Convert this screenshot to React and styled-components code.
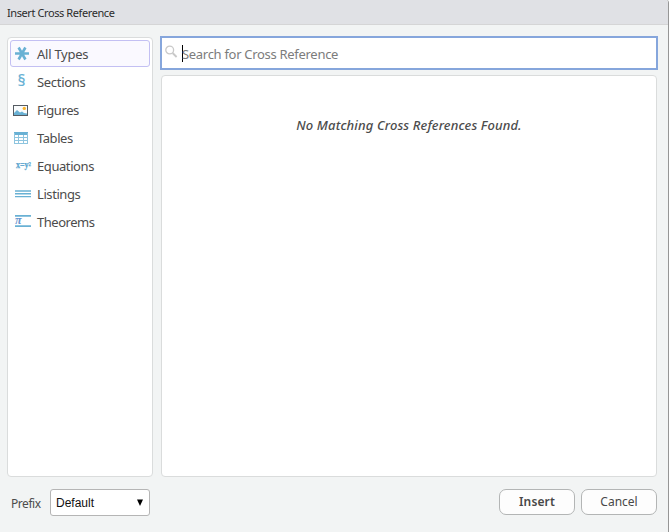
import React from "react";
import styled, { createGlobalStyle } from "styled-components";

const GlobalStyle = createGlobalStyle`
  * { box-sizing: border-box; }
  html, body { margin: 0; background: #f2f4f4; overflow: hidden; }
  body { font-family: "Noto Sans", "Open Sans", sans-serif; color: #4c4c4c; }
`;

const Dialog = styled.div`
  display: flex;
  flex-direction: column;
  width: 669px;
  height: 532px;
  background: #f2f4f4;
  border-right: 1px solid #969696;
  border-top-right-radius: 3px;
  overflow: hidden;
`;

const TitleBar = styled.header`
  flex: none;
  height: 25px;
  padding-left: 7px;
  background: #e0e1e5;
  border-bottom: 1px solid #d5d5d6;
  font-size: 11px;
  line-height: 26px;
  letter-spacing: -0.41px;
  color: #2c2c2c;
`;

const Body = styled.main`
  display: grid;
  grid-template-columns: 146px 498px;
  column-gap: 7px;
  height: 452px;
  padding: 11px 0 0 7px;
`;

const TypeList = styled.nav`
  height: 440px;
  margin-top: 1px;
  padding: 2px;
  background: #fff;
  border: 1px solid #dadcdc;
  border-radius: 4px;
`;

const TypeItem = styled.div`
  display: flex;
  align-items: center;
  height: 27px;
  margin-bottom: 1px;
  border: 1px solid ${(p) => (p.$selected ? "#c3c0f3" : "transparent")};
  border-radius: 3px;
  background: ${(p) => (p.$selected ? "#faf9ff" : "transparent")};
`;

const IconSlot = styled.span`
  flex: none;
  width: 26px;
  height: 25px;
  svg { display: block; }
`;

const TypeLabel = styled.span`
  font-size: 13px;
  line-height: 25px;
  padding-top: 2px;
  letter-spacing: ${(p) => p.$spacing}px;
  white-space: nowrap;
`;

const Content = styled.section`
  display: flex;
  flex-direction: column;
`;

const SearchBox = styled.div`
  display: flex;
  align-items: center;
  height: 34px;
  border: 2px solid #86a6dc;
  background: #fff;
  padding-left: 3px;
`;

const Caret = styled.span`
  width: 1px;
  height: 17px;
  margin: 1px -1px 0 3px;
  background: #000;
`;

const Placeholder = styled.span`
  padding-top: 2px;
  font-size: 13px;
  line-height: 20px;
  letter-spacing: -0.3px;
  color: #7c7c7c;
`;

const Results = styled.div`
  width: 496px;
  height: 402px;
  margin: 5px 0 0 1px;
  padding-top: 39px;
  background: #fff;
  border: 1px solid #dadcdc;
  border-radius: 4px;
  text-align: center;
  font-size: 13px;
  line-height: 20px;
  font-style: italic;
  font-weight: 500;
  letter-spacing: 0.13px;
`;

const Footer = styled.footer`
  display: flex;
  height: 55px;
  padding: 12px 11px 0 11px;
`;

const PrefixLabel = styled.label`
  width: 39px;
  padding-top: 6px;
  font-size: 12px;
  line-height: 18px;
  letter-spacing: -0.45px;
`;

const Select = styled.div`
  display: flex;
  align-items: center;
  justify-content: space-between;
  width: 100px;
  height: 27px;
  margin-right: auto;
  padding: 0 5px 0 5px;
  background: #fff;
  border: 1px solid #b5b5b5;
  border-radius: 3px;
  font-family: "Liberation Sans", Arial, sans-serif;
  font-size: 12px;
  color: #111;
`;

const Button = styled.button`
  width: 76px;
  height: 26px;
  margin-left: 6px;
  padding: 0 0 1px;
  background: #fdfdfd;
  border: 1px solid #b3b5b5;
  border-radius: 7px;
  font-family: inherit;
  font-size: 12px;
  letter-spacing: ${(p) => (p.$primary ? 0.15 : 0)}px;
  font-weight: ${(p) => (p.$primary ? 600 : 400)};
  line-height: 22px;
  color: #484848;
`;

const BLUE = "#69b1d4";

const Icon = ({ children }) => (
  <svg width="26" height="25" viewBox="0 0 26 25">{children}</svg>
);

const icons = {
  all: (
    <Icon>
      <path d="M4 12.5h14M7.6 6.5l6.8 12M14.4 6.5l-6.8 12" stroke={BLUE} strokeWidth="2.6" fill="none" />
    </Icon>
  ),
  section: (
    <Icon>
      <text x="6.6" y="16.8" fontFamily="Noto Sans" fontSize="16" fontWeight="500" fill={BLUE}>§</text>
    </Icon>
  ),
  figure: (
    <Icon>
      <rect x="2.5" y="8.5" width="14" height="10" fill="#fafcfd" stroke="#555b62" />
      <path d="M3 18v-2l3-3 3 2.5 2-1 2 1.5 3 .5v1.5z" fill={BLUE} />
      <circle cx="13.3" cy="11.4" r="1.7" fill="#fbb52c" />
    </Icon>
  ),
  table: (
    <Icon>
      <path d="M3 7h14v3H3z" fill={BLUE} />
      <path d="M3.5 8v11M7.5 10v9M12.5 10v9M16.5 8v11M3 12.5h14M3 15.5h14M3 18.5h14" stroke="#8ec5df" fill="none" />
    </Icon>
  ),
  equation: (
    <Icon>
      <text x="5" y="14.5" fontFamily="Liberation Serif" fontSize="9.5" fontWeight="700" fill="#5da6cf" stroke="#5da6cf" strokeWidth=".25" textLength="15" lengthAdjust="spacingAndGlyphs">x=y²</text>
    </Icon>
  ),
  listing: (
    <Icon>
      <path d="M4 10h16M4 12.8h16M4 15.6h16" stroke={BLUE} strokeWidth="1.4" />
    </Icon>
  ),
  theorem: (
    <Icon>
      <path d="M4 6.9h16M4 17.1h16" stroke={BLUE} strokeWidth="1.8" />
      <text x="4" y="14.7" fontFamily="Liberation Serif" fontSize="12" fontStyle="italic" fontWeight="700" fill="#6a97cf">π</text>
    </Icon>
  ),
};

const types = [
  { id: "all", label: "All Types", spacing: -0.25 },
  { id: "section", label: "Sections", spacing: -0.3 },
  { id: "figure", label: "Figures", spacing: -0.42 },
  { id: "table", label: "Tables", spacing: -0.45 },
  { id: "equation", label: "Equations", spacing: -0.42 },
  { id: "listing", label: "Listings", spacing: -0.42 },
  { id: "theorem", label: "Theorems", spacing: -0.48 },
];

export default function App() {
  return (
    <>
      <GlobalStyle />
      <Dialog>
        <TitleBar>Insert Cross Reference</TitleBar>
        <Body>
          <TypeList>
            {types.map((t) => (
              <TypeItem key={t.id} $selected={t.id === "all"}>
                <IconSlot>{icons[t.id]}</IconSlot>
                <TypeLabel $spacing={t.spacing}>{t.label}</TypeLabel>
              </TypeItem>
            ))}
          </TypeList>
          <Content>
            <SearchBox>
              <svg width="14" height="28" viewBox="0 0 14 28" fill="none" stroke="#c9c9c9">
                <circle cx="4.7" cy="11" r="3.9" strokeWidth="1.3" />
                <path d="M7.6 14l4 4" strokeWidth="1.8" />
              </svg>
              <Caret />
              <Placeholder>Search for Cross Reference</Placeholder>
            </SearchBox>
            <Results>No Matching Cross References Found.</Results>
          </Content>
        </Body>
        <Footer>
          <PrefixLabel>Prefix</PrefixLabel>
          <Select>
            Default
            <svg width="8" height="8" viewBox="0 0 8 8"><path d="M1 0.5h6L4 7z" fill="#000" /></svg>
          </Select>
          <Button $primary>Insert</Button>
          <Button>Cancel</Button>
        </Footer>
      </Dialog>
    </>
  );
}
